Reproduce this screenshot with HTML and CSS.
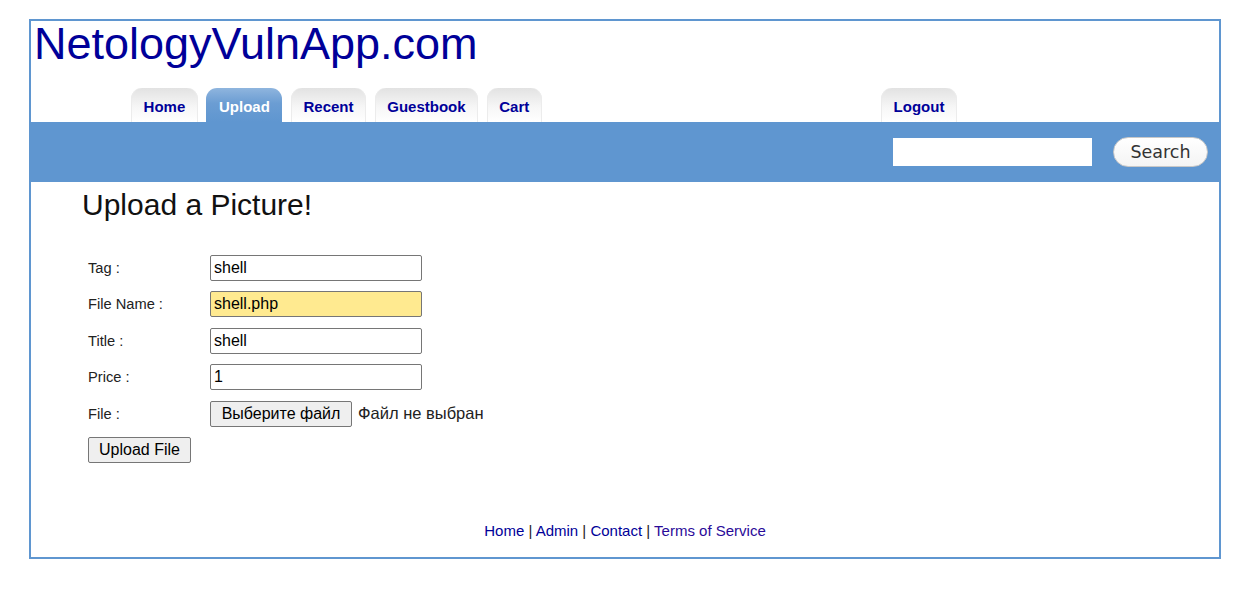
FILE: index.html
```html
<!DOCTYPE html>
<html lang="en">
<head>
<meta charset="utf-8">
<title>NetologyVulnApp.com</title>
<link rel="stylesheet" href="styles.css">
</head>
<body>
<div class="page">
  <header class="header">
    <h1 class="site-title">NetologyVulnApp.com</h1>
    <nav class="tabs">
      <a class="tab" href="#">Home</a>
      <a class="tab active" href="#">Upload</a>
      <a class="tab" href="#">Recent</a>
      <a class="tab" href="#">Guestbook</a>
      <a class="tab" href="#">Cart</a>
      <a class="tab logout" href="#">Logout</a>
    </nav>
  </header>
  <div class="searchbar">
    <input class="search-input" type="text">
    <button class="search-btn" type="button">Search</button>
  </div>
  <main class="content">
    <h2 class="heading">Upload a Picture!</h2>
    <form class="upload-form">
      <label class="lbl">Tag :</label>
      <input class="field" type="text" value="shell">
      <label class="lbl">File Name :</label>
      <input class="field autofill" type="text" value="shell.php">
      <label class="lbl">Title :</label>
      <input class="field" type="text" value="shell">
      <label class="lbl">Price :</label>
      <input class="field" type="text" value="1">
      <label class="lbl">File :</label>
      <div class="file-pick">
        <button class="btn btn-file" type="button">Выберите файл</button>
        <span class="file-none">Файл не выбран</span>
      </div>
      <div class="submit-row">
        <button class="btn btn-submit" type="button">Upload File</button>
      </div>
    </form>
  </main>
  <footer class="footer">
    <a href="#">Home</a> | <a href="#">Admin</a> | <a href="#">Contact</a> | <a class="visited" href="#">Terms of Service</a>
  </footer>
</div>
</body>
</html>
```

FILE: styles.css
```css
html, body {
  margin: 0;
  padding: 0;
  background: #fff;
}

body {
  font-family: "Liberation Sans", Arial, sans-serif;
}

.page {
  width: 1188px;
  margin: 19px 0 0 29px;
  border: 2px solid #5f96d0;
  display: flex;
  flex-direction: column;
}

.header {
  padding: 1px 0 0 3px;
}

.site-title {
  margin: 0;
  font-size: 45px;
  line-height: 44px;
  font-weight: normal;
  color: #000099;
}

.tabs {
  display: flex;
  gap: 8.5px;
  margin-top: 22px;
  padding-left: 97px;
  height: 34px;
}

.tab {
  display: block;
  height: 34px;
  line-height: 37px;
  padding: 0 12.6px;
  font-size: 15px;
  font-weight: bold;
  color: #000099;
  text-decoration: none;
  border-radius: 11px 11px 0 0;
  background: linear-gradient(#e2e2e2, #f6f6f6 55%, #ffffff);
  box-shadow: inset 1px 0 0 #ececec, inset -1px 0 0 #ececec;
}

.tab.active {
  color: #fff;
  background: linear-gradient(#8fb5de, #6b9dd3 45%, #5f96d0);
  box-shadow: none;
}

.tab.logout {
  margin-left: auto;
  margin-right: 262px;
}

.searchbar {
  height: 60px;
  background: #5f96d0;
  display: flex;
  align-items: center;
  justify-content: flex-end;
  gap: 21px;
  padding-right: 11px;
}

.search-input {
  width: 199px;
  height: 28px;
  box-sizing: border-box;
  border: none;
  margin: 0;
  background: #fff;
}

.search-btn {
  width: 95px;
  height: 30px;
  box-sizing: border-box;
  border: 1px solid #c8c8c8;
  border-radius: 15px;
  background: linear-gradient(#ffffff, #f4f4f4);
  font-family: "DejaVu Sans", sans-serif;
  font-size: 17.5px;
  color: #333;
  padding: 0 0 1px;
  margin: 0;
}

.content {
  padding-left: 51px;
}

.heading {
  margin: 6px 0 0;
  font-size: 30px;
  line-height: 34px;
  font-weight: normal;
  color: #111;
}

.upload-form {
  display: grid;
  grid-template-columns: 122px auto;
  row-gap: 10.4px;
  align-items: center;
  justify-items: start;
  margin: 33px 0 0 6px;
}

.lbl {
  font-size: 14.67px;
  color: #222;
}

.field {
  width: 212px;
  height: 26px;
  box-sizing: border-box;
  margin: 0;
  padding: 0 3px;
  border: 1px solid #767676;
  border-radius: 2px;
  font-family: "Liberation Sans", Arial, sans-serif;
  font-size: 16px;
  color: #000;
  background: #fff;
}

.field.autofill {
  background: #ffea90;
}

.file-pick {
  display: flex;
  align-items: center;
}

.btn {
  height: 26px;
  box-sizing: border-box;
  margin: 0;
  border: 1px solid #767676;
  border-radius: 2px;
  background: #efefef;
  font-family: "Liberation Sans", Arial, sans-serif;
  font-size: 16px;
  color: #000;
}

.btn-file {
  width: 142px;
  padding: 0;
}

.btn-submit {
  width: 103px;
  padding: 0;
}

.file-none {
  margin-left: 6px;
  font-size: 16.5px;
  color: #222;
}

.submit-row {
  grid-column: 1 / -1;
}

.footer {
  margin-top: 59px;
  padding-bottom: 18px;
  text-align: center;
  font-size: 15px;
  line-height: 17px;
  color: #222;
}

.footer a {
  color: #000099;
  text-decoration: none;
}

.footer a.visited {
  color: #2a0a99;
}
```
